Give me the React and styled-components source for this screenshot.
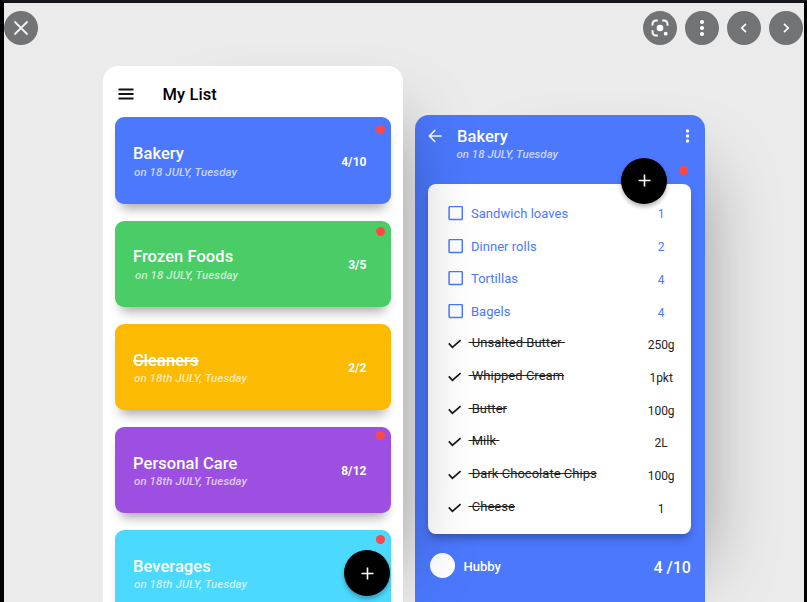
import React from "react";
import styled, { createGlobalStyle } from "styled-components";

const Global = createGlobalStyle`
  * { box-sizing: border-box; }
  html, body { margin: 0; padding: 0; overflow: hidden; }
  body { font-family: Roboto, sans-serif; background: #000; }
`;

const Viewer = styled.main`
  height: 602px;
  width: 807px;
  border: solid #000;
  border-width: 3px 3px 0 4px;
  border-top-color: #17151c;
  background: #ebebeb;
  overflow: hidden;
  position: relative;
`;

const Toolbar = styled.header`
  position: absolute;
  inset: 8px 1px auto 0;
  display: flex;
  justify-content: space-between;
`;

const ButtonGroup = styled.div`
  display: flex;
  gap: 8px;
`;

const RoundButton = styled.button`
  width: 34px;
  height: 34px;
  padding: 0;
  border: 0;
  border-radius: 50%;
  background: #727375;
  display: grid;
  place-items: center;
  svg { display: block; }
`;

const Stage = styled.div`
  display: flex;
  align-items: flex-start;
  gap: 12px;
  padding: 63px 0 0 99px;
`;

const Phone = styled.section`
  position: relative;
  flex: none;
  color: #000;
  box-shadow: 51px 4px 74px -55px rgba(0, 0, 0, 0.38);
`;

const ListPhone = styled(Phone)`
  z-index: 1;
  width: 300px;
  height: 550px;
  padding: 0 12.5px 0 11.5px;
  border-radius: 15px;
  background: #fff;
`;

const DetailPhone = styled(Phone)`
  width: 290.4px;
  height: 500px;
  margin-top: 48.5px;
  padding: 0 14.5px 0 13px;
  border-radius: 14px;
  background: #4b78fd;
`;

const ListHeader = styled.div`
  display: flex;
  align-items: center;
  gap: 28.5px;
  height: 51.4px;
  padding: 5px 0 0 3.5px;
  svg { display: block; }
`;

const PageTitle = styled.h1`
  margin: 0;
  font-size: 16.5px;
  font-weight: 500;
  letter-spacing: 0.1px;
`;

const CardStack = styled.div`
  display: flex;
  flex-direction: column;
  gap: 16.7px;
`;

const Card = styled.article`
  position: relative;
  display: flex;
  align-items: center;
  justify-content: space-between;
  height: 86.5px;
  padding: 2.5px 24px 0 18.5px;
  border-radius: 9px;
  background: ${(p) => p.$color};
  color: #fff;
  box-shadow: 0 10px 12px -6px rgba(0, 0, 0, 0.36);
`;

const CardTitle = styled.h2`
  margin: 0;
  font-size: 16.5px;
  line-height: 20px;
  font-weight: 500;
  letter-spacing: 0.06px;
  text-decoration: ${(p) => (p.$done ? "line-through" : "none")};
  text-decoration-thickness: 1.5px;
`;

const DateLine = styled.p`
  margin: -0.5px 0 0 ${(p) => p.$indent || 0}px;
  font-size: 11.5px;
  line-height: 16px;
  font-weight: 500;
  font-style: italic;
  letter-spacing: ${(p) => (p.$tight ? 0 : 0.08)}px;
  color: rgba(255, 255, 255, 0.7);
`;

const Count = styled.span`
  font-size: 12px;
  line-height: 14px;
  font-weight: 700;
  letter-spacing: 0.05px;
`;

const Dot = styled.i`
  position: absolute;
  top: ${(p) => p.$top}px;
  right: ${(p) => p.$right}px;
  width: 9px;
  height: 9px;
  border-radius: 50%;
  background: #fd4845;
`;

const Fab = styled.button`
  position: absolute;
  top: ${(p) => p.$top}px;
  right: ${(p) => p.$right}px;
  width: 46px;
  height: 46px;
  padding: 0;
  border: 0;
  border-radius: 50%;
  background: #000;
  display: grid;
  place-items: center;
  box-shadow: 0 3px 4px rgba(0, 0, 0, 0.28);
`;

const DetailHeader = styled.div`
  display: flex;
  justify-content: space-between;
  height: 69.3px;
  color: #fff;
  svg { display: block; }
`;

const Heading = styled.div`
  display: flex;
  gap: 14px;
  padding-top: 12px;
  > svg { margin-top: 2.7px; }
`;

const MenuDots = styled.svg`
  margin: 14.8px 1px 0 0;
`;

const Sheet = styled.ul`
  list-style: none;
  margin: 0;
  height: 350px;
  padding: 13.3px 0 0 20.2px;
  border-radius: 8px;
  background: #fff;
  box-shadow: 0 6px 10px -2px rgba(0, 0, 0, 0.3);
`;

const Item = styled.li`
  display: grid;
  grid-template-columns: 22.8px 1fr 59.5px;
  align-items: center;
  height: 32.7px;
  color: ${(p) => (p.$done ? "#222" : "#4b78fd")};
  svg { display: block; }
`;

const ItemName = styled.span`
  font-size: 13px;
  line-height: 16px;
  letter-spacing: 0.03px;
  white-space: pre;
  justify-self: start;
  margin-left: ${(p) => (p.$done ? -2.5 : 0)}px;
  text-decoration: ${(p) => (p.$done ? "line-through" : "none")};
  position: relative;
  top: ${(p) => (p.$done ? -1 : 0.5)}px;
`;

const Quantity = styled.span`
  font-size: 12px;
  line-height: 16px;
  text-align: center;
  padding-top: 2px;
`;

const Footer = styled.footer`
  display: flex;
  align-items: center;
  height: 63px;
  padding: 0 0 0 2px;
  color: #fff;
`;

const Avatar = styled.span`
  width: 25px;
  height: 25px;
  border-radius: 50%;
  background: #fff;
`;

const Owner = styled.span`
  flex: 1;
  margin-left: 8.5px;
  padding-top: 2px;
  font-size: 13px;
  font-weight: 500;
`;

const Total = styled.span`
  padding-top: 5px;
  font-size: 16px;
  font-weight: 500;
  letter-spacing: 0;
`;

const CloseIcon = () => (
  <svg width="16" height="16" viewBox="0 0 16 16" stroke="#f1f1f1" strokeWidth="1.9">
    <path d="M1.5 1.5l13 13M14.5 1.5l-13 13" />
  </svg>
);

const LensIcon = () => (
  <svg width="18" height="18" viewBox="0 0 18 18" fill="none" stroke="#fff" strokeWidth="1.9">
    <path d="M1.5 6.5V5a3.5 3.5 0 0 1 3.5-3.5h1.8M11.2 1.5H13A3.5 3.5 0 0 1 16.5 5v1.8M1.5 11.2V13A3.5 3.5 0 0 0 5 16.5h1.8" />
    <circle cx="9" cy="9" r="3.3" fill="#fff" stroke="none" />
    <circle cx="14.7" cy="14.7" r="1.9" fill="#fff" stroke="none" />
  </svg>
);

const MoreIcon = () => (
  <svg width="6" height="18" viewBox="0 0 6 18" fill="#fff">
    <circle cx="3" cy="3" r="2.1" />
    <circle cx="3" cy="9" r="2.1" />
    <circle cx="3" cy="15" r="2.1" />
  </svg>
);

const Chevron = ({ d }) => (
  <svg width="10" height="10" viewBox="0 0 10 10" fill="none" stroke="#fff" strokeWidth="1.7">
    <path d={d} />
  </svg>
);

const MenuIcon = () => (
  <svg width="16" height="12" viewBox="0 0 16 12" stroke="#111" strokeWidth="1.8">
    <path d="M.5 1.5h15M.5 6h15M.5 10.5h15" />
  </svg>
);

const BackIcon = () => (
  <svg width="15" height="14" viewBox="0 0 15 14" fill="none" stroke="#fff" strokeWidth="1.6">
    <path d="M13.6 7H1.6M7.2 1L1.4 7l5.8 6" />
  </svg>
);

const PlusIcon = () => (
  <svg width="13" height="13" viewBox="0 0 13 13" stroke="#fff" strokeWidth="1.6">
    <path d="M6.5 .5v12M.5 6.5h12" />
  </svg>
);

const BoxIcon = () => (
  <svg width="15" height="15" viewBox="0 0 15 15" fill="none" stroke="#4b78fd" strokeWidth="1.5">
    <rect x="1.1" y=".4" width="13.2" height="13.2" rx="1.2" />
  </svg>
);

const CheckIcon = () => (
  <svg width="14" height="10" viewBox="0 0 14 10" fill="none" stroke="#161616" strokeWidth="1.7">
    <path d="M.8 4.4l3.6 4 8.2-7.3" />
  </svg>
);

const lists = [
  { title: "Bakery", date: "on 18 JULY, Tuesday", count: "4/10", color: "#4b78fd", dot: 7.2, indent: 1 },
  { title: "Frozen Foods", date: "on 18 JULY, Tuesday", count: "3/5", color: "#4acd67", dot: 6.1, indent: 2 },
  { title: "Cleaners", date: "on 18th JULY, Tuesday", count: "2/2", color: "#fcba02", done: true, indent: 1 },
  { title: "Personal Care", date: "on 18th JULY, Tuesday", count: "8/12", color: "#9d4fe1", dot: 4.4, indent: 1 },
  { title: "Beverages", date: "on 18th JULY, Tuesday", count: "", color: "#4bd9fe", dot: 4.6, indent: 1 },
];

const items = [
  { name: "Sandwich loaves", qty: "1" },
  { name: "Dinner rolls", qty: "2" },
  { name: "Tortillas", qty: "4" },
  { name: "Bagels", qty: "4" },
  { name: " Unsalted Butter ", qty: "250g", done: true },
  { name: " Whipped Cream", qty: "1pkt", done: true },
  { name: " Butter", qty: "100g", done: true },
  { name: " Milk ", qty: "2L", done: true },
  { name: " Dark Chocolate Chips", qty: "100g", done: true },
  { name: " Cheese", qty: "1", done: true },
];

export default function App() {
  return (
    <>
      <Global />
      <Viewer>
        <Stage>
          <ListPhone>
            <ListHeader>
              <MenuIcon />
              <PageTitle>My List</PageTitle>
            </ListHeader>
            <CardStack>
              {lists.map((l) => (
                <Card key={l.title} $color={l.color}>
                  <div>
                    <CardTitle $done={l.done}>{l.title}</CardTitle>
                    <DateLine $indent={l.indent}>{l.date}</DateLine>
                  </div>
                  <Count>{l.count}</Count>
                  {l.dot && <Dot $top={l.dot} $right={5.6} />}
                </Card>
              ))}
            </CardStack>
            <Fab $top={484.3} $right={13} aria-label="Add list">
              <PlusIcon />
            </Fab>
          </ListPhone>
          <DetailPhone>
            <DetailHeader>
              <Heading>
                <BackIcon />
                <div>
                  <CardTitle>Bakery</CardTitle>
                  <DateLine $tight $indent={-0.5}>on 18 JULY, Tuesday</DateLine>
                </div>
              </Heading>
              <MenuDots width="5" height="14" viewBox="0 0 5 14" fill="#fff">
                <circle cx="2.5" cy="2" r="1.7" />
                <circle cx="2.5" cy="7" r="1.7" />
                <circle cx="2.5" cy="12" r="1.7" />
              </MenuDots>
            </DetailHeader>
            <Sheet>
              {items.map((it) => (
                <Item key={it.name} $done={it.done}>
                  {it.done ? <CheckIcon /> : <BoxIcon />}
                  <ItemName $done={it.done}>{it.name}</ItemName>
                  <Quantity>{it.qty}</Quantity>
                </Item>
              ))}
            </Sheet>
            <Footer>
              <Avatar />
              <Owner>Hubby</Owner>
              <Total>4 /10</Total>
            </Footer>
            <Dot $top={51} $right={17.4} />
            <Fab $top={43} $right={38} aria-label="Add item">
              <PlusIcon />
            </Fab>
          </DetailPhone>
        </Stage>
        <Toolbar>
          <RoundButton aria-label="Close"><CloseIcon /></RoundButton>
          <ButtonGroup>
            <RoundButton aria-label="Search image"><LensIcon /></RoundButton>
            <RoundButton aria-label="More"><MoreIcon /></RoundButton>
            <RoundButton aria-label="Previous"><Chevron d="M7 .8L2.8 5 7 9.2" /></RoundButton>
            <RoundButton aria-label="Next"><Chevron d="M3 .8L7.2 5 3 9.2" /></RoundButton>
          </ButtonGroup>
        </Toolbar>
      </Viewer>
    </>
  );
}
